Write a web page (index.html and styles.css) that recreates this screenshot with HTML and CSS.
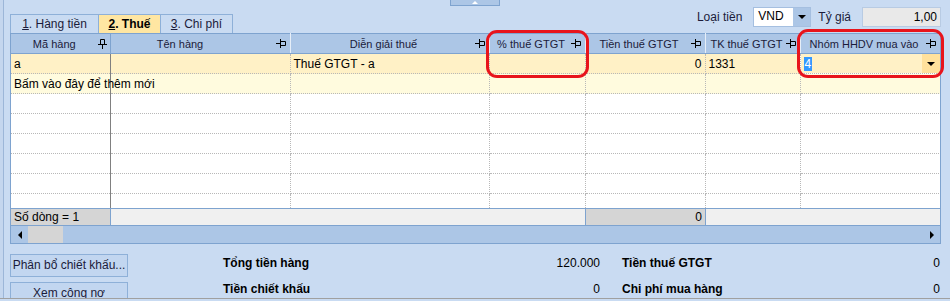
FILE: index.html
```html
<html lang="vi">
    <head>
        <meta charset="UTF-8">
        <title>Thuế</title>
        <link rel="stylesheet" href="styles.css">
    </head>
    <body>
        <div class="page">
            <div class="side-strip"></div>
            <div class="main">
                <div class="collapse-btn"><span class="up-arrow"></span></div>
                <div class="topbar">
                    <div class="tabs">
                        <div class="tab tab1"><u>1</u>. Hàng tiền</div>
                        <div class="tab tab2 active"><u>2</u>. Thuế</div>
                        <div class="tab tab3"><u>3</u>. Chi phí</div>
                    </div>
                    <div class="currency">
                        <span class="lbl">Loại tiền</span>
                        <div class="combo">
                            <span class="combo-text">VND</span>
                            <span class="combo-btn"><span class="down-arrow"></span></span>
                        </div>
                        <span class="lbl lbl-rate">Tỷ giá</span>
                        <div class="rate">1,00</div>
                    </div>
                </div>

                <div class="grid">
                    <div class="grid-body">
                        <table class="tbl">
                            <colgroup>
                                <col class="c1"><col class="c2"><col class="c3"><col class="c4"><col class="c5"><col class="c6"><col class="c7">
                            </colgroup>
                            <tr class="head">
                                <th class="fixed">Mã hàng<svg class="pin pin-v" width="9" height="10" viewBox="0 0 9 10"><path d="M2.5 0.5h4v5h-4z M0 5.5h9 M4.5 5.5v4.5" fill="none" stroke="#000" stroke-width="1"/></svg></th>
                                <th class="name-head">Tên hàng<svg class="pin" width="10" height="9" viewBox="0 0 10 9"><path d="M4.5 2.5h5v4h-5z M4.5 0v9 M0 4.5h4.5" fill="none" stroke="#000" stroke-width="1"/></svg></th>
                                <th>Diễn giải thuế<svg class="pin" width="10" height="9" viewBox="0 0 10 9"><path d="M4.5 2.5h5v4h-5z M4.5 0v9 M0 4.5h4.5" fill="none" stroke="#000" stroke-width="1"/></svg></th>
                                <th>% thuế GTGT<svg class="pin" width="10" height="9" viewBox="0 0 10 9"><path d="M4.5 2.5h5v4h-5z M4.5 0v9 M0 4.5h4.5" fill="none" stroke="#000" stroke-width="1"/></svg></th>
                                <th>Tiền thuế GTGT<svg class="pin" width="10" height="9" viewBox="0 0 10 9"><path d="M4.5 2.5h5v4h-5z M4.5 0v9 M0 4.5h4.5" fill="none" stroke="#000" stroke-width="1"/></svg></th>
                                <th>TK thuế GTGT<svg class="pin" width="10" height="9" viewBox="0 0 10 9"><path d="M4.5 2.5h5v4h-5z M4.5 0v9 M0 4.5h4.5" fill="none" stroke="#000" stroke-width="1"/></svg></th>
                                <th>Nhóm HHDV mua vào<svg class="pin" width="10" height="9" viewBox="0 0 10 9"><path d="M4.5 2.5h5v4h-5z M4.5 0v9 M0 4.5h4.5" fill="none" stroke="#000" stroke-width="1"/></svg></th>
                            </tr>
                            <tr class="row-active">
                                <td class="fixed">a</td>
                                <td></td>
                                <td>Thuế GTGT - a</td>
                                <td></td>
                                <td class="num">0</td>
                                <td>1331</td>
                                <td class="edit-cell"><span class="sel">4</span><span class="cell-btn"><span class="down-arrow"></span></span></td>
                            </tr>
                            <tr class="row-new">
                                <td class="fixed"><span class="overflow">Bấm vào đây để thêm mới</span></td>
                                <td></td><td></td><td></td><td></td><td></td><td></td>
                            </tr>
                            <tr><td class="fixed"></td><td></td><td></td><td></td><td></td><td></td><td></td></tr>
                            <tr><td class="fixed"></td><td></td><td></td><td></td><td></td><td></td><td></td></tr>
                            <tr><td class="fixed"></td><td></td><td></td><td></td><td></td><td></td><td></td></tr>
                            <tr><td class="fixed"></td><td></td><td></td><td></td><td></td><td></td><td></td></tr>
                            <tr><td class="fixed"></td><td></td><td></td><td></td><td></td><td></td><td></td></tr>
                            <tr><td class="fixed"></td><td></td><td></td><td></td><td></td><td></td><td></td></tr>
                        </table>
                    </div>
                    <div class="footer">
                        <div class="f-cell f-gray f-count">Số dòng = 1</div>
                        <div class="f-cell f-light f-mid"></div>
                        <div class="f-cell f-gray f-sum">0</div>
                        <div class="f-cell f-light f-rest"></div>
                    </div>
                    <div class="hscroll">
                        <span class="left-arrow"></span>
                        <span class="thumb"></span>
                        <span class="track"></span>
                        <span class="right-arrow"></span>
                    </div>
                </div>

                <div class="bottom">
                    <div class="buttons">
                        <div class="btn">Phân bổ chiết khấu...</div>
                        <div class="btn">Xem công nợ</div>
                    </div>
                    <div class="summary">
                        <div class="sum-row">
                            <span class="sum-lbl">Tổng tiền hàng</span>
                            <span class="sum-val">120.000</span>
                            <span class="sum-lbl sum-lbl2">Tiền thuế GTGT</span>
                            <span class="sum-val sum-val2">0</span>
                        </div>
                        <div class="sum-row">
                            <span class="sum-lbl">Tiền chiết khấu</span>
                            <span class="sum-val">0</span>
                            <span class="sum-lbl sum-lbl2">Chi phí mua hàng</span>
                            <span class="sum-val sum-val2">0</span>
                        </div>
                    </div>
                </div>

                <div class="mark mark1"></div>
                <div class="mark mark2"></div>
            </div>
        </div>
    </body>
</html>
```

FILE: styles.css
```css
body{margin: 0; padding: 0; background: #c9dbf2; font-family: "Liberation Sans", Arial, sans-serif; font-size: 11px; color: #000;}
.page{
    display: flex;
    height: 298px;
    border-bottom: 1px solid #a0a0a0;
    overflow: hidden;
}
.side-strip{
    width: 3px;
    flex: none;
    background: #c4d6ee;
    border-right: 1px solid #9cb6d8;
}
.main{
    position: relative;
    flex: 1;
    padding: 0 9px 0 6px;
}
.collapse-btn{
    position: absolute;
    left: 446px;
    top: -1px;
    width: 48px;
    height: 5px;
    background: #acc6e6;
    border: 1px solid #7ea3cf;
    display: flex;
    justify-content: center;
    align-items: flex-end;
}
.up-arrow{
    width: 0;
    height: 0;
    border-left: 3px solid transparent;
    border-right: 3px solid transparent;
    border-bottom: 3px solid #fff;
    margin-bottom: 1px;
}

/* top bar */
.topbar{
    height: 33px;
    display: flex;
    justify-content: space-between;
}
.tabs{
    display: flex;
    align-items: flex-end;
}
.tab{
    box-sizing: border-box;
    height: 19px;
    line-height: 18px;
    border: 1px solid #8eb0d8;
    border-bottom: none;
    border-right: none;
    background: #c9dbf2;
    color: #1b1b3a;
    font-size: 12px;
    text-align: center;
}
.tab3{border-right: 1px solid #8eb0d8;}
.tab1{width: 88px;}
.tab2{width: 62px;}
.tab3{width: 73px;}
.tab.active{background: #ffe6a2; font-weight: bold; color: #000;}
.currency{
    display: flex;
    align-items: center;
    height: 20px;
    margin-top: 7px;
}
.lbl{font-size: 12px; color: #1b1b3a; margin-right: 11px;}
.lbl-rate{margin-left: 7px; margin-right: 11px;}
.combo{
    display: flex;
    width: 58px;
    height: 20px;
    box-sizing: border-box;
    border: 1px solid #a5bfe0;
    background: #fff;
}
.combo-text{flex: 1; padding-left: 4px; line-height: 17px; font-size: 12px;}
.combo-btn{
    width: 17px;
    background: #acc6e6;
    display: flex;
    align-items: center;
    justify-content: center;
}
.down-arrow{
    width: 0;
    height: 0;
    border-left: 4px solid transparent;
    border-right: 4px solid transparent;
    border-top: 4px solid #000;
}
.rate{
    width: 79px;
    height: 20px;
    box-sizing: border-box;
    border: 1px solid #b8cbe3;
    background: #e9e9e9;
    text-align: right;
    padding-right: 3px;
    line-height: 18px;
    font-size: 12px;
}

/* grid */
.grid{
    width: 931px;
    box-sizing: border-box;
    border: 1px solid #7ea3cf;
    border-top: none;
    background: #fff;
}
.grid-body{
    height: 175px;
    overflow: hidden;
}
.tbl{
    border-collapse: collapse;
    table-layout: fixed;
    width: 929px;
}
.c1{width: 99px;}
.c2{width: 180px;}
.c3{width: 199px;}
.c4{width: 96px;}
.c5{width: 120px;}
.c6{width: 95px;}
.c7{width: 140px;}
.tbl th{
    position: relative;
    height: 20px;
    box-sizing: border-box;
    padding: 0 12px 0 0;
    background: #acc6e6;
    font-weight: normal;
    font-size: 11px;
    color: #1b1b3a;
    white-space: nowrap;
    border-right: 1px solid #e6eef8;
    border-top: 1px solid #7ea3cf;
    border-bottom: 1px solid #7ea3cf;
    text-align: center;
}
.tbl th.fixed{border-right: 1px solid #7ea3cf;}
.tbl th.name-head{padding-right: 40px;}
.pin{
    position: absolute;
    right: 4px;
    top: 5px;
}
.pin-v{top: 5px; right: 3px;}
.tbl td{
    height: 20px;
    padding: 0 3px;
    box-sizing: border-box;
    font-size: 12px;
    white-space: nowrap;
    border-right: 1px dotted #b8b8b8;
    border-bottom: 1px dotted #b8b8b8;
}
.tbl td.fixed{border-right: 1px solid #808080; overflow: visible;}
.tbl td.num{text-align: right;}
.row-active td{background: #fff1c6;}
.row-new td{background: #fffbde;}
.overflow{position: relative; z-index: 1;}
.edit-cell{position: relative;}
.sel{
    background: #3399ff;
    color: #fff;
    padding: 0 1px;
}
.cell-btn{
    position: absolute;
    right: 0;
    top: 0;
    width: 18px;
    height: 19px;
    background: #ffe19c;
    display: flex;
    align-items: center;
    justify-content: center;
}

.footer{
    display: flex;
    height: 17px;
    box-sizing: border-box;
    border-top: 1px solid #7ea3cf;
    font-size: 12px;
    line-height: 16px;
}
.f-cell{box-sizing: border-box; padding: 0 3px;}
.f-gray{background: #d5d5d5;}
.f-light{background: #f0f0f0;}
.f-count{width: 99px;}
.f-mid{width: 475px; border-left: 1px solid #7ea3cf;}
.f-sum{width: 120px; text-align: right; border-left: 1px solid #7ea3cf;}
.f-rest{flex: 1; border-left: 1px solid #7ea3cf;}
.hscroll{
    display: flex;
    align-items: center;
    height: 18px;
    box-sizing: border-box;
    border-top: 1px solid #7ea3cf;
    background: #acc6e6;
}
.left-arrow{
    width: 0;
    height: 0;
    border-top: 4px solid transparent;
    border-bottom: 4px solid transparent;
    border-right: 4px solid #000;
    margin: 0 6px 0 7px;
}
.thumb{width: 35px; height: 17px; background: #d5d5d5;}
.track{flex: 1;}
.right-arrow{
    width: 0;
    height: 0;
    border-top: 4px solid transparent;
    border-bottom: 4px solid transparent;
    border-left: 4px solid #000;
    margin: 0 6px 0 6px;
}

/* bottom */
.bottom{
    display: flex;
    padding-top: 10px;
}
.buttons{
    display: flex;
    flex-direction: column;
    gap: 5px;
    width: 118px;
}
.btn{
    height: 23px;
    box-sizing: border-box;
    border: 1px solid #8eb0d8;
    background: #c2d6f0;
    font-size: 12px;
    color: #1b1b3a;
    line-height: 21px;
    text-align: center;
}
.summary{
    padding-left: 95px;
    margin-top: -4px;
}
.sum-row{
    display: flex;
    height: 26px;
    align-items: center;
}
.sum-lbl{font-weight: bold; font-size: 12px; width: 120px;}
.sum-val{width: 257px; text-align: right; font-size: 12px;}
.sum-lbl2{margin-left: 22px; width: 120px;}
.sum-val2{width: 198px;}

/* red annotation marks */
.mark{
    position: absolute;
    border: 3px solid #e8141c;
    border-radius: 11px;
    box-sizing: border-box;
}
.mark1{left: 482px; top: 30px; width: 103px; height: 48px;}
.mark2{left: 793px; top: 29px; width: 147px; height: 49px;}
```
